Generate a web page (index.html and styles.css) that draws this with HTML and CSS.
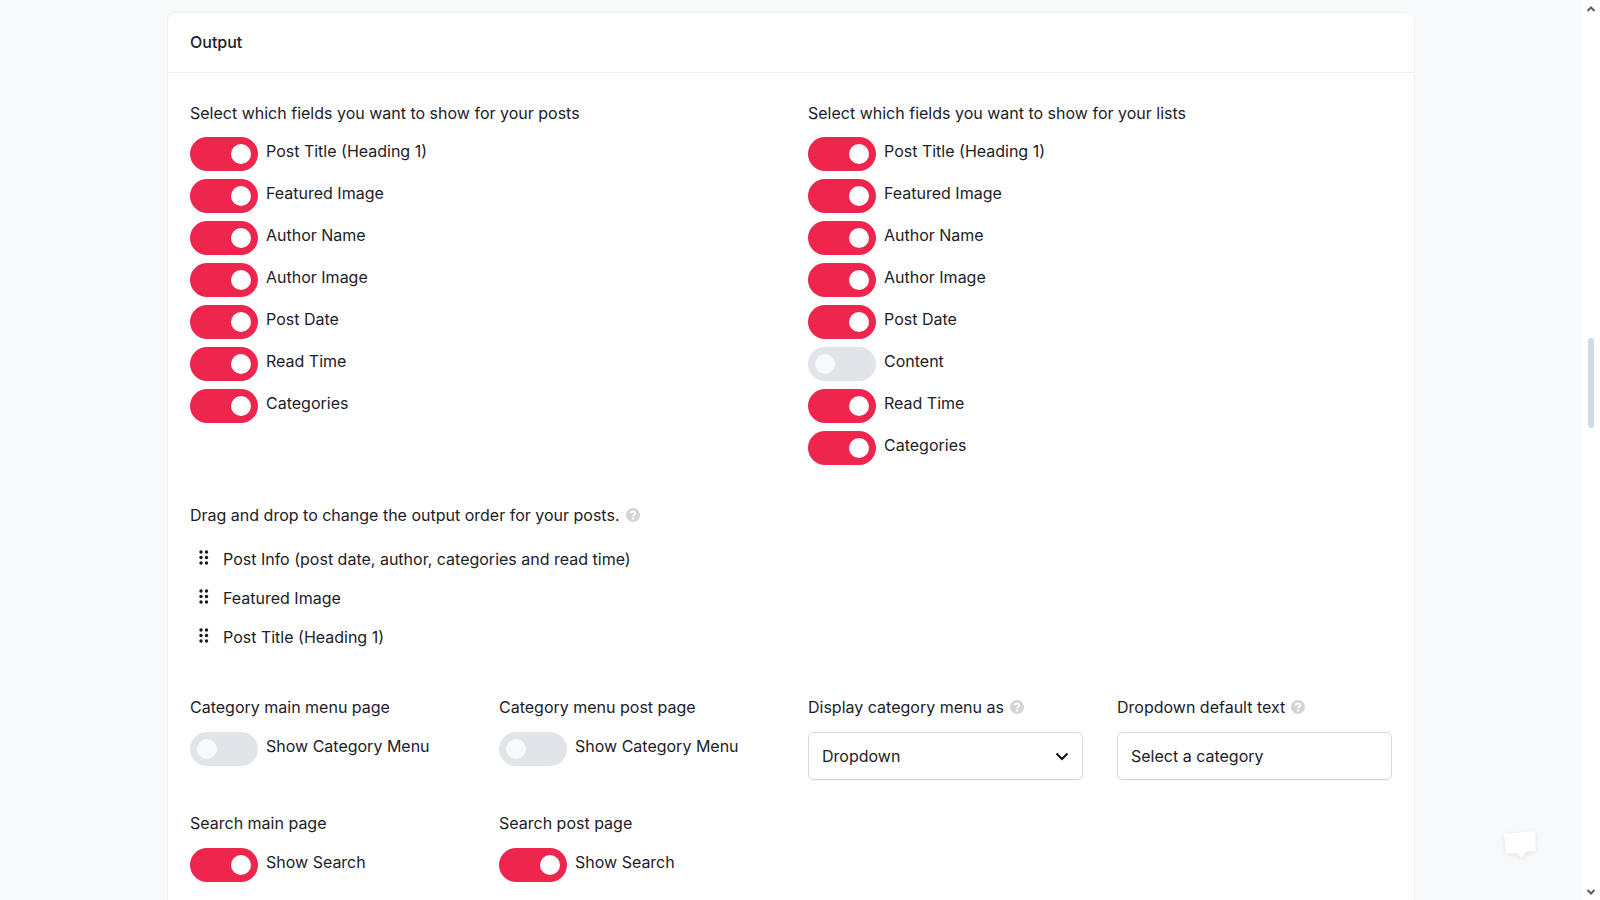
FILE: index.html
```html
<!DOCTYPE html>
<html lang="en">
<head>
<meta charset="utf-8">
<title>Output</title>
<link rel="stylesheet" href="styles.css">
</head>
<body>
<svg class="defs" aria-hidden="true">
  <symbol id="help" viewBox="0 0 14 14"><circle cx="7" cy="7" r="7" fill="#d4d4d4"/><path d="M4.700 5.500C4.800 4.100 5.800 3.400 7 3.400c1.400 0 2.300.8 2.300 1.900C9.300 6.800 7.200 6.800 7.200 8.300" fill="none" stroke="#fff" stroke-width="2"/><circle cx="7.200" cy="10.500" r="1.200" fill="#fff"/></symbol>
  <symbol id="grip" viewBox="0 0 10 15"><g fill="#161b22"><circle cx="2" cy="2" r="1.700"/><circle cx="7.500" cy="2" r="1.700"/><circle cx="2" cy="7.500" r="1.700"/><circle cx="7.500" cy="7.500" r="1.700"/><circle cx="2" cy="13" r="1.700"/><circle cx="7.500" cy="13" r="1.700"/></g></symbol>
</svg>
<div class="shell">
  <main class="page">
    <section class="card">
      <header class="card-header"><h2 class="card-title">Output</h2></header>
      <div class="card-body">
        <div class="halves">
          <fieldset class="group">
            <legend class="caption">Select which fields you want to show for your posts</legend>
            <div class="switches">
              <label class="switch"><input type="checkbox" checked><span>Post Title (Heading 1)</span></label>
              <label class="switch"><input type="checkbox" checked><span>Featured Image</span></label>
              <label class="switch"><input type="checkbox" checked><span>Author Name</span></label>
              <label class="switch"><input type="checkbox" checked><span>Author Image</span></label>
              <label class="switch"><input type="checkbox" checked><span>Post Date</span></label>
              <label class="switch"><input type="checkbox" checked><span>Read Time</span></label>
              <label class="switch"><input type="checkbox" checked><span>Categories</span></label>
            </div>
          </fieldset>
          <fieldset class="group">
            <legend class="caption">Select which fields you want to show for your lists</legend>
            <div class="switches">
              <label class="switch"><input type="checkbox" checked><span>Post Title (Heading 1)</span></label>
              <label class="switch"><input type="checkbox" checked><span>Featured Image</span></label>
              <label class="switch"><input type="checkbox" checked><span>Author Name</span></label>
              <label class="switch"><input type="checkbox" checked><span>Author Image</span></label>
              <label class="switch"><input type="checkbox" checked><span>Post Date</span></label>
              <label class="switch"><input type="checkbox"><span>Content</span></label>
              <label class="switch"><input type="checkbox" checked><span>Read Time</span></label>
              <label class="switch"><input type="checkbox" checked><span>Categories</span></label>
            </div>
          </fieldset>
        </div>
        <div class="order">
          <p class="caption">Drag and drop to change the output order for your posts.<svg class="help"><use href="#help"/></svg></p>
          <ul class="order-list">
            <li class="order-item"><svg class="grip"><use href="#grip"/></svg><span>Post Info (post date, author, categories and read time)</span></li>
            <li class="order-item"><svg class="grip"><use href="#grip"/></svg><span>Featured Image</span></li>
            <li class="order-item"><svg class="grip"><use href="#grip"/></svg><span>Post Title (Heading 1)</span></li>
          </ul>
        </div>
        <div class="quarters">
          <fieldset class="group field"><legend class="caption">Category main menu page</legend>
            <label class="switch"><input type="checkbox"><span>Show Category Menu</span></label></fieldset>
          <fieldset class="group field"><legend class="caption">Category menu post page</legend>
            <label class="switch"><input type="checkbox"><span>Show Category Menu</span></label></fieldset>
          <div class="field"><label class="caption" for="menu-as">Display category menu as<svg class="help"><use href="#help"/></svg></label>
            <div class="select-box"><select class="control" id="menu-as"><option>Dropdown</option></select><svg class="chevron" viewBox="0 0 14 9"><path d="M1.500 1.500 7 7l5.500-5.500" fill="none" stroke="#111" stroke-width="2"/></svg></div></div>
          <div class="field"><label class="caption" for="default-text">Dropdown default text<svg class="help"><use href="#help"/></svg></label>
            <input class="control" id="default-text" type="text" value="Select a category"></div>
          <fieldset class="group field"><legend class="caption">Search main page</legend>
            <label class="switch"><input type="checkbox" checked><span>Show Search</span></label></fieldset>
          <fieldset class="group field"><legend class="caption">Search post page</legend>
            <label class="switch"><input type="checkbox" checked><span>Show Search</span></label></fieldset>
        </div>
      </div>
    </section>
  </main>
  <div class="scrollbar" aria-hidden="true">
    <svg class="arrow" viewBox="0 0 8 6"><path d="M.5 5 4 1.500 7.500 5" fill="none" stroke="#606060" stroke-width="2"/></svg>
    <div class="track"><div class="thumb"></div></div>
    <svg class="arrow" viewBox="0 0 8 6"><path d="M.5 1 4 4.500 7.500 1" fill="none" stroke="#606060" stroke-width="2"/></svg>
  </div>
</div>
<button class="chat" type="button" aria-label="Open chat"><svg viewBox="0 0 40 36" width="40" height="36"><path d="M4 8 35 5 36 25 26 26 22 32 17 27 6 28Z" fill="#fff"/></svg></button>
</body>
</html>
```
FILE: styles.css
```css
* { box-sizing: border-box; }

body {
  margin: 0;
  background: #f8f9fb;
  color: #1c2128;
  font: 16px/24px Inter, sans-serif;
}

.defs { display: none; }

.shell {
  display: flex;
  height: 100vh;
  overflow: hidden;
}

.page {
  flex: 1;
  min-width: 0;
  padding: 12px 24px 0;
  overflow: hidden;
}

.card {
  max-width: 1248px;
  min-height: 100vh;
  margin: 0 auto;
  background: #fff;
  border: 1px solid #f0f1f2;
  border-radius: 8px;
}

.card-header {
  padding: 17px 22px 18px;
  border-bottom: 1px solid #f0f1f2;
}

.card-title {
  margin: 0;
  font-size: 16px;
  font-weight: 500;
  line-height: 24px;
}

.card-body { padding: 28px 22px 40px; }

.halves {
  display: grid;
  grid-template-columns: 1fr 1fr;
  gap: 34px;
}

.group {
  min-width: 0;
  margin: 0;
  padding: 0;
  border: 0;
}

.caption {
  display: flex;
  align-items: center;
  gap: 6px;
  margin: 0;
  padding: 0;
}

.switches {
  display: flex;
  flex-direction: column;
  gap: 8px;
  padding-top: 12px;
}

.switch {
  display: flex;
  gap: 8px;
  align-items: flex-start;
}

.switch span { padding-top: 2px; }

.switch input {
  appearance: none;
  flex: none;
  width: 68px;
  height: 34px;
  margin: 0;
  padding: 7px;
  border-radius: 17px;
  background: #e1e4e9;
  display: flex;
}

.switch input::before {
  content: "";
  width: 20px;
  height: 20px;
  border-radius: 50%;
  background: #f8f9fb;
}

.switch input:checked {
  background: #ee254d;
  justify-content: flex-end;
}

.switch input:checked::before { background: #fff; }

.help {
  width: 14px;
  height: 14px;
}

.order { padding-top: 38px; }

.order-list {
  margin: 0;
  padding: 13px 0 0;
  list-style: none;
}

.order-item {
  display: flex;
  gap: 14px;
  padding: 7px 9px 8px;
}

.grip {
  width: 10px;
  height: 15px;
  margin-top: 3px;
}

.quarters {
  display: grid;
  grid-template-columns: repeat(4, 1fr);
  gap: 31px 34px;
  padding-top: 38px;
}

.field .caption { padding-bottom: 13px; }

.control {
  display: block;
  width: 100%;
  height: 48px;
  padding: 0 13px;
  border: 1px solid #d8dadd;
  border-radius: 6px;
  background: #fff;
  color: inherit;
  font: inherit;
  box-shadow: 0 1px 2px #0000000d;
  appearance: none;
}

.select-box { position: relative; }

.chevron {
  position: absolute;
  right: 14px;
  top: 20px;
  width: 14px;
  height: 9px;
  pointer-events: none;
}

.scrollbar {
  display: flex;
  flex-direction: column;
  align-items: center;
  width: 18px;
  padding: 6px 0 5px;
  background: #fff;
}

.arrow {
  width: 8px;
  height: 6px;
}

.track {
  flex: 1;
  padding-top: 326px;
}

.thumb {
  width: 6px;
  height: 90px;
  border-radius: 3px;
  background: #cfdae3;
}

.chat {
  position: fixed;
  right: 60px;
  bottom: 38px;
  padding: 0;
  border: 0;
  background: none;
}

.chat svg {
  display: block;
  filter: drop-shadow(0 1px 2px #0000001a);
}
```
